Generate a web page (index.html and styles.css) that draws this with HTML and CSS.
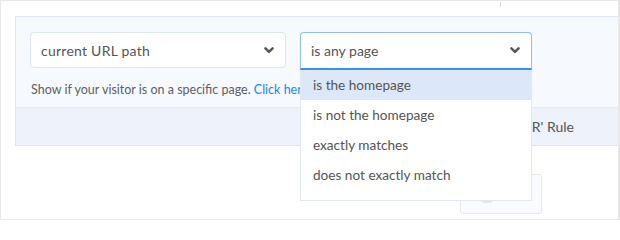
FILE: index.html
```html
<!DOCTYPE html>
<html>
<head>
<meta charset="utf-8">
<link rel="stylesheet" href="styles.css">
</head>
<body>
<div class="frame">
  <div class="topbar"><span class="tick"></span></div>
  <div class="panel">
    <div class="rule">
      <div class="row">
        <div class="select select-a">
          <span class="val">current URL path</span>
          <svg class="chev" width="10" height="7" viewBox="0 0 10 7"><path d="M1.4 1.3 L5 4.9 L8.6 1.3" fill="none" stroke="#555" stroke-width="2.4" stroke-linecap="round" stroke-linejoin="round"/></svg>
        </div>
        <div class="select select-b">
          <span class="val">is any page</span>
          <svg class="chev" width="10" height="7" viewBox="0 0 10 7"><path d="M1.4 1.3 L5 4.9 L8.6 1.3" fill="none" stroke="#555" stroke-width="2.4" stroke-linecap="round" stroke-linejoin="round"/></svg>
          <ul class="menu">
            <li class="item active">is the homepage</li>
            <li class="item">is not the homepage</li>
            <li class="item">exactly matches</li>
            <li class="item">does not exactly match</li>
          </ul>
        </div>
      </div>
      <p class="help">Show if your visitor is on a specific page. <a class="link">Click here to learn more.</a></p>
    </div>
    <div class="band"><span class="band-label">Add New 'OR' Rule</span></div>
  </div>
  <div class="bottom">
    <div class="btnbox"><span class="bump"></span></div>
  </div>
</div>
</body>
</html>
```
FILE: styles.css
```css
* { box-sizing: border-box; }
html, body { margin: 0; padding: 0; background: #fff; }
body { font-family: "Lato", "Liberation Sans", sans-serif; color: #555; }
.frame {
  width: 620px; height: 220px; overflow: hidden;
  border: 1px solid #e8e8e8; border-right-width: 2px;
  background: #fff; position: relative;
}
.topbar { height: 15px; position: relative; }
.tick { position: absolute; left: 499px; top: 1px; width: 1px; height: 5px; background: #d6d6d6; }
.panel {
  margin-left: 14px; width: 640px;
  border: 1px solid #dde6f4;
  background: #f6f9fe;
}
.rule { padding: 15px 0 0 14px; height: 90px; }
.row { display: flex; gap: 14px; }
.select {
  height: 36px; background: #fff; border: 1px solid #dde5f1; border-radius: 4px;
  display: flex; align-items: center; justify-content: space-between;
  padding: 0 11px 0 10px; font-size: 14px; color: #555; position: relative;
}
.select-a { width: 256px; letter-spacing: 0.25px; }
.select-b {
  width: 232px; height: 38px; border-color: #93bdf3; border-bottom: 2px solid #3d8ef0;
  border-radius: 4px 4px 0 0; padding-right: 11px; padding-bottom: 1px;
}
.chev { display: block; }
.menu {
  position: absolute; left: -1px; top: 37px; width: 232px; margin: 0; padding: 0 0 10px;
  list-style: none; background: #fff; border: 1px solid #e2e8f2; border-top: none;
  z-index: 5;
}
.item { height: 30px; line-height: 30px; padding-left: 12px; font-size: 13.6px; color: #555; }
.item.active { background: #dce8f8; }
.help { margin: 12px 0 0 1px; font-size: 12.5px; color: #5e5e5e; }
.link { color: #1a88e8; }
.band {
  height: 38px; background: #edf2fb; border-top: 1px solid #e4ebf7;
  display: flex; align-items: center;
}
.band-label { width: 558px; text-align: right; font-size: 14px; color: #555; }
.bottom { padding: 28px 0 0 459px; }
.btnbox {
  width: 82px; height: 40px; border: 1px solid #e3e9f4; border-radius: 3px; background: #f9fbff;
  position: relative;
}
.bump { position: absolute; left: 20px; top: 24px; width: 12px; height: 4px; background: #e6e6e6; border-radius: 0 0 4px 4px; }
```
